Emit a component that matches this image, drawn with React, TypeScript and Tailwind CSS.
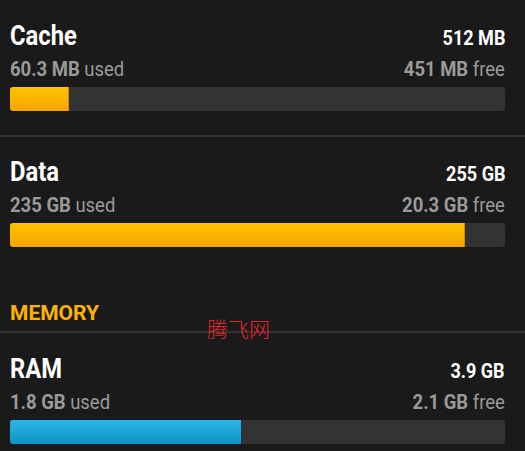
import React from "react";

type Item = {
  name: string;
  total: string;
  usedNum: string;
  freeNum: string;
  fill: number;
  color: "yellow" | "blue";
};

function Row({ item, first }: { item: Item; first?: boolean }) {
  return (
    <div className={first ? "pl-[10px] pr-[20px] pt-[21px]" : "pl-[10px] pr-[20px] pt-[20px]"}>
      <div className="flex h-[30px] items-baseline justify-between leading-[30px]">
        <span className="inline-block origin-left scale-x-[0.88] text-[27px] font-bold text-white">
          {item.name}
        </span>
        <span className="inline-block origin-right scale-x-[0.88] text-[20.5px] font-bold text-white">
          {item.total}
        </span>
      </div>
      <div className="mt-[6px] flex h-[24px] items-baseline justify-between leading-[24px] text-[21px] text-[#9a9a9a]">
        <span className="inline-block origin-left scale-x-[0.88]">
          <span className="font-bold">{item.usedNum}</span> used
        </span>
        <span className="inline-block origin-right scale-x-[0.88]">
          <span className="font-bold">{item.freeNum}</span> free
        </span>
      </div>
      <div className="mt-[6px] flex h-[24px] overflow-hidden rounded-[3px] bg-[#333333]">
        <div
          className={
            item.color === "yellow"
              ? "h-full border-r border-[#d48a00] bg-gradient-to-b from-[#ffc400] to-[#f7a400]"
              : "h-full bg-gradient-to-b from-[#2db6e8] to-[#0894c6]"
          }
          style={{ width: `${item.fill}px` }}
        />
      </div>
    </div>
  );
}

export default function App() {
  const cache: Item = { name: "Cache", total: "512 MB", usedNum: "60.3 MB", freeNum: "451 MB", fill: 59, color: "yellow" };
  const data: Item = { name: "Data", total: "255 GB", usedNum: "235 GB", freeNum: "20.3 GB", fill: 455, color: "yellow" };
  const ram: Item = { name: "RAM", total: "3.9 GB", usedNum: "1.8 GB", freeNum: "2.1 GB", fill: 231, color: "blue" };
  return (
    <div className="relative h-[451px] w-[525px] overflow-hidden bg-[#1a1a1a] font-['Roboto',sans-serif]">
      <Row item={cache} first />
      <div className="mt-[24px] h-[2px] bg-[#333333]" />
      <Row item={data} />
      <div className="mt-[54px] px-[10px] text-[21px] font-bold leading-[24px] text-[#ffb300]">MEMORY</div>
      <div className="mt-[6px] h-[2px] bg-[#333333]" />
      <Row item={ram} first />
      <div className="pointer-events-none absolute left-[207px] top-[314px] text-[21px] font-light leading-[28px] text-[#e3262b] font-['Noto_Sans_CJK_SC',sans-serif]">
        腾飞网
      </div>
    </div>
  );
}
